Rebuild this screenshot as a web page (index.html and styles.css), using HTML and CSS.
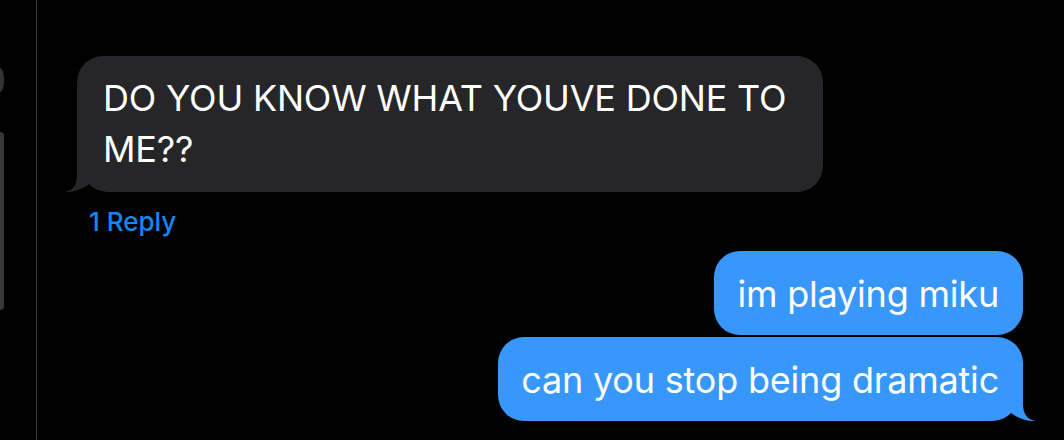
FILE: index.html
```html
<!DOCTYPE html>
<html lang="en">
<head>
<meta charset="utf-8">
<title>Messages</title>
<link rel="stylesheet" href="styles.css">
</head>
<body>
<div class="screen">
  <div class="gutter">
    <div class="peek peek-round"></div>
    <div class="peek peek-tall"></div>
  </div>
  <div class="thread">
    <div class="bubble received">
      <span class="txt">DO YOU KNOW WHAT YOUVE DONE TO ME??</span>
      <svg class="tail tail-left" viewBox="-12 -26 44 26" width="44" height="26" aria-hidden="true">
        <rect x="-12" y="-26" width="44" height="26" fill="#000"/>
        <path d="M0,-26 L0,-17 C0,-7 -4,-2 -12,0 C-4,0.5 6,-3 12,-8 C16,-4 22,0 32,0 L32,-26 Z" fill="currentColor"/>
      </svg>
    </div>
    <div class="reply-link">1 Reply</div>
    <div class="sent-group">
      <div class="bubble sent">im playing miku</div>
      <div class="bubble sent last">
        <span class="txt">can you stop being dramatic</span>
        <svg class="tail tail-right" viewBox="-12 -26 44 26" width="44" height="26" aria-hidden="true">
          <rect x="-12" y="-26" width="44" height="26" fill="#000"/>
          <path d="M0,-26 L0,-17 C0,-7 -4,-2 -12,0 C-4,0.5 6,-3 12,-8 C16,-4 22,0 32,0 L32,-26 Z" fill="currentColor"/>
        </svg>
      </div>
    </div>
  </div>
</div>
</body>
</html>
```
FILE: styles.css
```css
html, body {
  margin: 0;
  padding: 0;
  background: #000;
}
body {
  width: 1064px;
  height: 440px;
  overflow: hidden;
  font-family: "Inter", "Noto Sans", "Liberation Sans", sans-serif;
  color: #fff;
}
.screen {
  display: flex;
  height: 440px;
}
.gutter {
  width: 36px;
  flex: none;
  border-right: 1px solid #3a3a3c;
  display: flex;
  flex-direction: column;
}
.peek {
  background: #333335;
  margin-left: -4px;
}
.peek-round {
  width: 8px;
  height: 24px;
  border-radius: 50%;
  margin-top: 68px;
}
.peek-tall {
  width: 8px;
  height: 178px;
  border-radius: 4px;
  margin-top: 40px;
  background: #38383a;
}
.thread {
  flex: 1;
  display: flex;
  flex-direction: column;
  padding-top: 56px;
}
.bubble {
  position: relative;
  font-size: 36px;
  line-height: 51px;
  letter-spacing: -0.2px;
  border-radius: 26px;
}
.txt {
  position: relative;
  z-index: 1;
}
.received {
  align-self: flex-start;
  margin-left: 40px;
  width: 694px;
  padding: 17px 26px 17px 26px;
  background: #262628;
  color: #fff;
}
.tail {
  position: absolute;
  bottom: 0;
  display: block;
}
.tail-left {
  left: -12px;
  color: #262628;
}
.tail-right {
  right: -12px;
  transform: scaleX(-1);
  color: #3797fb;
}
.reply-link {
  margin-left: 52px;
  margin-top: 15px;
  font-size: 26px;
  line-height: 30px;
  font-weight: 500;
  color: #1486f8;
}
.sent-group {
  margin-top: 14px;
  display: flex;
  flex-direction: column;
  align-items: flex-end;
  gap: 2px;
  padding-right: 41px;
}
.sent {
  background: #3797fb;
  color: #fff;
  padding: 18px 24px 15px 23px;
}
```
